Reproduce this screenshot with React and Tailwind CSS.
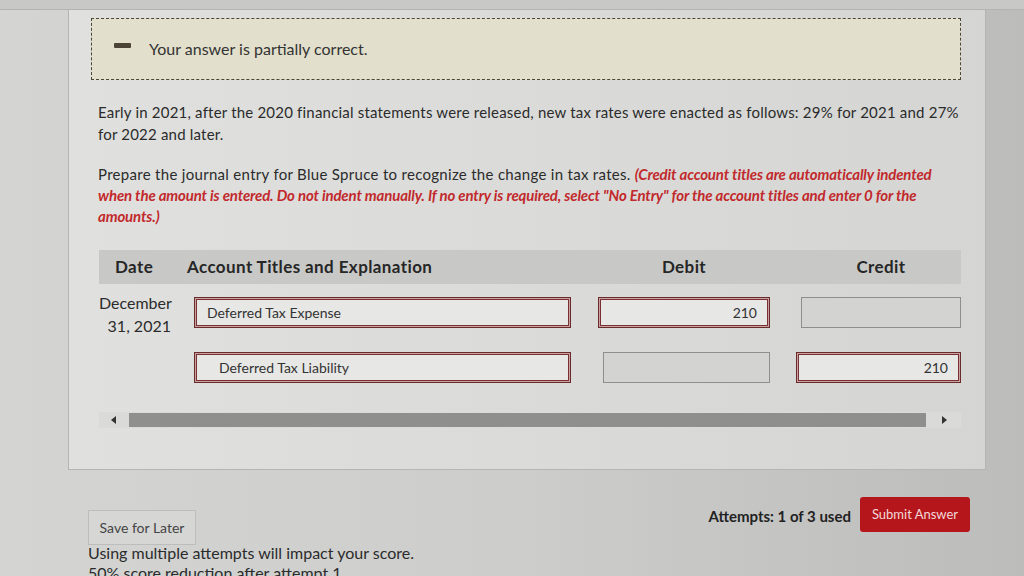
import React from "react";

function RedInput({ value, className = "", align = "left" }) {
  return (
    <div
      className={`h-[31px] border border-[#6b2a2c] shadow-[inset_0_0_0_1px_#c9a2a2,inset_0_0_0_2px_#7a3032] bg-[#e7e7e5] flex items-center text-[14px] text-[#333] ${
        align === "right" ? "justify-end pr-3" : "pl-3"
      } ${className}`}
    >
      {value}
    </div>
  );
}

function GrayInput({ className = "" }) {
  return <div className={`h-[31px] border border-[#8e8f8d] bg-[#d3d4d2] ${className}`}></div>;
}

export default function App() {
  return (
    <div className="w-[1024px] h-[576px] overflow-hidden bg-gradient-to-r from-[#d4d5d3] via-[#cdcecc] to-[#bcbdbb] font-['Lato','Liberation_Sans',sans-serif] text-[#2b2b2b]">
      {/* top strip of the screen */}
      <div className="h-[10px] bg-[#c8c9c7] border-b border-[#b3b4b2]"></div>

      {/* main question panel */}
      <div className="ml-[68px] w-[918px] h-[460px] border-x border-b border-[#b5b6b4] bg-gradient-to-r from-[#e0e1df] to-[#d5d6d4] pt-[8px]">
        {/* partial-correct notice */}
        <div className="ml-[22px] w-[870px] h-[62px] border border-dashed border-[#4a4638] bg-[#e2dfcc] flex items-center pl-[22px]">
          <span className="w-[17px] h-[5px] mb-[8px] rounded-[1px] bg-[#4a4336]"></span>
          <span className="ml-[18px] text-[16px] text-[#333]">Your answer is partially correct.</span>
        </div>

        <p className="ml-[29px] mt-[21px] w-[866px] text-[15px] leading-[22px] tracking-[0.2px] text-[#2b2b2b]">
          Early in 2021, after the 2020 financial statements were released, new tax rates were enacted as follows: 29% for 2021 and 27% for 2022 and later.
        </p>

        <p className="ml-[29px] mt-[19px] w-[850px] text-[15px] leading-[21px] tracking-[0.3px] text-[#2b2b2b]">
          Prepare the journal entry for Blue Spruce to recognize the change in tax rates.{" "}
          <span className="text-[#c2292c] font-bold italic tracking-[-0.15px]">
            (Credit account titles are automatically indented when the amount is entered. Do not indent manually. If no entry is required, select "No Entry" for the account titles and enter 0 for the amounts.)
          </span>
        </p>

        {/* journal table */}
        <div className="ml-[30px] w-[862px] mt-[23px]">
          <div className="h-[34px] bg-[#c8c9c6] flex items-center text-[17px] font-bold tracking-[0.4px] text-[#262626]">
            <div className="w-[88px] pl-[16px]">Date</div>
            <div className="w-[411px]">Account Titles and Explanation</div>
            <div className="w-[172px] text-center">Debit</div>
            <div className="w-[31px]"></div>
            <div className="w-[160px] text-center">Credit</div>
          </div>

          <div className="flex items-start mt-[13px]">
            <div className="w-[72px] text-right text-[16px] leading-[23px] -mt-[6px]">
              December
              <br />
              31, 2021
            </div>
            <RedInput value="Deferred Tax Expense" className="ml-[23px] w-[377px]" />
            <RedInput value="210" align="right" className="ml-[27px] w-[172px]" />
            <GrayInput className="ml-[31px] w-[160px]" />
          </div>

          <div className="flex items-start mt-[15px]">
            <div className="w-[72px]"></div>
            <RedInput value="Deferred Tax Liability" className="ml-[23px] w-[377px] pl-[24px]" />
            <GrayInput className="ml-[32px] w-[167px]" />
            <RedInput value="210" align="right" className="ml-[26px] w-[165px]" />
          </div>

          {/* horizontal scrollbar */}
          <div className="mt-[29px] h-[16px] flex items-center bg-[#dadad8]">
            <div className="w-[30px] flex justify-center">
              <svg width="6" height="8" viewBox="0 0 6 8"><path d="M5 0 L0 4 L5 8 Z" fill="#333" /></svg>
            </div>
            <div className="w-[797px] h-[14px] bg-[#8f908d]"></div>
            <div className="flex-1 flex justify-center">
              <svg width="6" height="8" viewBox="0 0 6 8"><path d="M1 0 L6 4 L1 8 Z" fill="#333" /></svg>
            </div>
          </div>
        </div>
      </div>

      {/* footer actions */}
      <div className="flex items-start mt-[27px] ml-[88px] w-[882px]">
        <div className="mt-[13px] h-[35px] w-[108px] border border-[#bdbdbb] bg-[#d6d7d5] flex items-center justify-center text-[14px] text-[#444]">
          Save for Later
        </div>
        <div className="flex-1"></div>
        <div className="mt-[8px] text-[15px] font-bold text-[#222]">Attempts: 1 of 3 used</div>
        <div className="ml-[9px] h-[35px] w-[110px] rounded-[3px] bg-[#b5161c] flex items-center justify-center text-[13px] text-[#f3d9d9]">
          Submit Answer
        </div>
      </div>
      <div className="ml-[88px] mt-[-2px] text-[16px] leading-[20px] text-[#2b2b2b]">
        Using multiple attempts will impact your score.
        <br />
        50% score reduction after attempt 1
      </div>
    </div>
  );
}
